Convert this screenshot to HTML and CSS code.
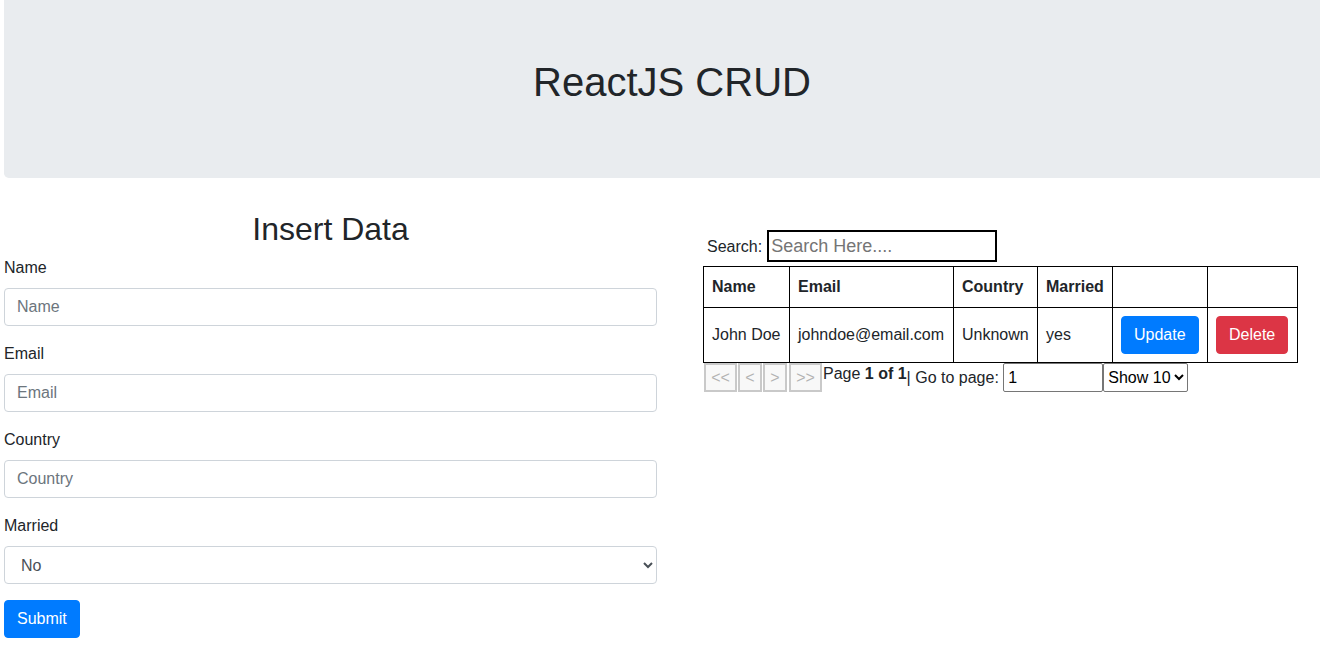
FILE: index.html
```html
<!DOCTYPE html>
<html lang="en">
<head>
<meta charset="utf-8">
<title>ReactJS CRUD</title>
<link rel="stylesheet" href="styles.css">
</head>
<body>
<div class="app">
  <div class="jumbotron">
    <h1>ReactJS CRUD</h1>
  </div>
  <div class="main">
    <div class="form-col">
      <h2>Insert Data</h2>
      <div class="form-group">
        <label>Name</label>
        <input class="form-control" type="text" placeholder="Name">
      </div>
      <div class="form-group">
        <label>Email</label>
        <input class="form-control" type="text" placeholder="Email">
      </div>
      <div class="form-group">
        <label>Country</label>
        <input class="form-control" type="text" placeholder="Country">
      </div>
      <div class="form-group">
        <label>Married</label>
        <select class="form-control">
          <option>No</option>
          <option>Yes</option>
        </select>
      </div>
      <button class="btn btn-primary" type="button">Submit</button>
    </div>
    <div class="table-col">
      <div class="search-row">
        <span class="search-label">Search:</span>
        <input class="search-input" type="text" placeholder="Search Here....">
      </div>
      <table class="data-table">
        <thead>
          <tr>
            <th class="c-name">Name</th>
            <th class="c-email">Email</th>
            <th class="c-country">Country</th>
            <th class="c-married">Married</th>
            <th class="c-upd"></th>
            <th class="c-del"></th>
          </tr>
        </thead>
        <tbody>
          <tr>
            <td>John Doe</td>
            <td>johndoe@email.com</td>
            <td>Unknown</td>
            <td>yes</td>
            <td><button class="btn btn-primary" type="button">Update</button></td>
            <td><button class="btn btn-danger" type="button">Delete</button></td>
          </tr>
        </tbody>
      </table>
      <div class="pager">
        <button class="pg-btn pg-wide" type="button" disabled>&lt;&lt;</button>
        <button class="pg-btn" type="button" disabled>&lt;</button>
        <button class="pg-btn" type="button" disabled>&gt;</button>
        <button class="pg-btn pg-wide pg-last" type="button" disabled>&gt;&gt;</button>
        <span class="pg-info">Page <strong>1 of 1</strong></span>
        <span class="pg-goto">| Go to page: <input class="pg-input" type="number" value="1"></span>
        <select class="pg-select">
          <option>Show 10</option>
          <option>Show 20</option>
        </select>
      </div>
    </div>
  </div>
</div>
</body>
</html>
```

FILE: styles.css
```css
html, body {
  margin: 0;
  padding: 0;
  background: #fff;
}

body {
  font-family: "Liberation Sans", Arial, sans-serif;
  font-size: 16px;
  line-height: 1.5;
  color: #212529;
  overflow: hidden;
}

.app {
  padding-left: 4px;
  width: 1340px;
}

.jumbotron {
  width: 1336px;
  box-sizing: border-box;
  background: #e9ecef;
  padding: 58px 32px 64px;
  border-radius: 0 0 4.8px 4.8px;
  margin-bottom: 32px;
}

.jumbotron h1 {
  margin: 0 0 8px;
  font-size: 40px;
  font-weight: 500;
  line-height: 1.2;
  text-align: center;
}

.main {
  display: flex;
  align-items: flex-start;
}

.form-col {
  width: 653px;
}

.form-col h2 {
  margin: 0 0 8px;
  font-size: 32px;
  font-weight: 500;
  line-height: 1.2;
  text-align: center;
}

.form-group {
  margin-bottom: 16px;
}

.form-group label {
  display: block;
  margin-bottom: 8px;
}

.form-control {
  display: block;
  width: 100%;
  box-sizing: border-box;
  height: 38px;
  padding: 6px 12px;
  font-family: inherit;
  font-size: 16px;
  line-height: 1.5;
  color: #495057;
  background: #fff;
  border: 1px solid #ced4da;
  border-radius: 4px;
}

.form-control::placeholder {
  color: #6c757d;
}

.btn {
  display: inline-block;
  font-family: inherit;
  font-size: 16px;
  line-height: 1.5;
  padding: 6px 12px;
  border: 1px solid transparent;
  border-radius: 4px;
  color: #fff;
  cursor: pointer;
}

.btn-primary {
  background: #007bff;
  border-color: #007bff;
}

.btn-danger {
  background: #dc3545;
  border-color: #dc3545;
}

.table-col {
  margin-left: 46px;
  width: 595px;
  padding-top: 20px;
}

.search-row {
  display: flex;
  align-items: center;
  height: 32px;
  margin-bottom: 4px;
  padding-left: 4px;
  gap: 5px;
}

.search-label {
  padding-top: 2px;
}

.search-input {
  box-sizing: border-box;
  width: 230px;
  height: 32px;
  padding: 1px 2px;
  font-family: inherit;
  font-size: 18px;
  color: #000;
  border: 2px solid #000;
  background: #fff;
}

.search-input::placeholder {
  color: #757575;
}

.data-table {
  width: 595px;
  border-collapse: collapse;
  table-layout: fixed;
}

.data-table th,
.data-table td {
  border: 1px solid #000;
  padding: 8px;
  text-align: left;
  vertical-align: middle;
  white-space: nowrap;
}

.data-table th {
  font-weight: 700;
}

.c-name { width: 69px; }
.c-email { width: 147px; }
.c-country { width: 67px; }
.c-married { width: 58px; }
.c-upd { width: 78px; }
.c-del { width: 73px; }

.pager {
  display: flex;
  align-items: flex-start;
  margin-left: 1px;
  line-height: normal;
}

.pg-btn {
  box-sizing: border-box;
  height: 29px;
  width: 24px;
  margin-right: 1px;
  padding: 0;
  font-family: inherit;
  font-size: 16px;
  color: #b3b3b3;
  background: #f8f8f8;
  border: 2px solid #c9c9c9;
}

.pg-wide {
  width: 33px;
}

.pg-last {
  margin-left: 1px;
}

.pg-info {
  font-size: 16px;
  line-height: 18px;
  margin-top: 2px;
}

.pg-goto {
  font-size: 16px;
}

.pg-input {
  box-sizing: border-box;
  width: 100px;
  height: 29px;
  padding: 1px 4px;
  font-family: inherit;
  font-size: 16px;
  color: #000;
  border: 1px solid #767676;
  border-radius: 2px;
  -moz-appearance: textfield;
}

.pg-input::-webkit-outer-spin-button,
.pg-input::-webkit-inner-spin-button {
  -webkit-appearance: none;
  margin: 0;
}

.pg-select {
  box-sizing: border-box;
  width: 85px;
  height: 29px;
  font-family: inherit;
  font-size: 16px;
  color: #000;
  border: 1px solid #767676;
  border-radius: 2px;
  background: #fff;
}
```
